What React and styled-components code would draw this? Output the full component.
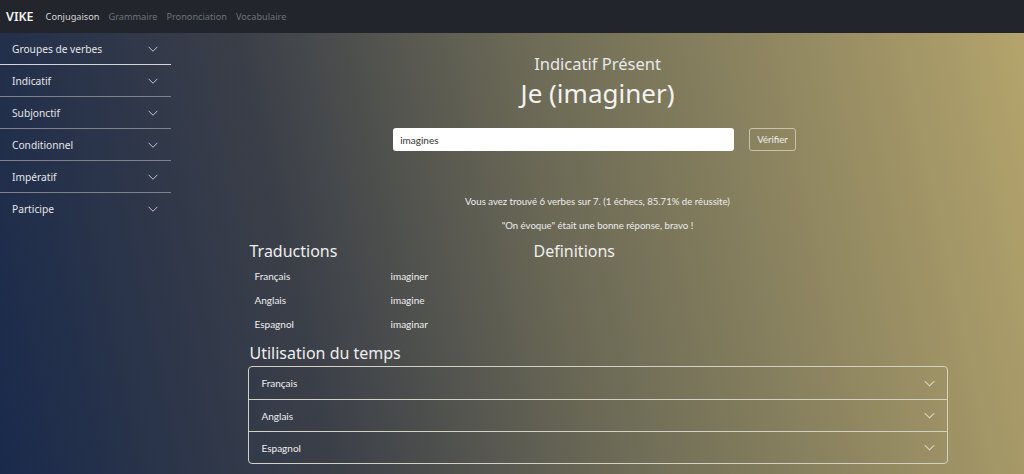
import React from "react";
import styled, { createGlobalStyle } from "styled-components";

const Global = createGlobalStyle`
  html, body { margin: 0; padding: 0; }
  body {
    font-family: "Lato", "Open Sans", sans-serif;
    background: #212529;
    width: 1024px;
    height: 474px;
    overflow: hidden;
  }
  * { box-sizing: border-box; }
`;

const Page = styled.div`
  width: 1024px;
  height: 474px;
  display: flex;
  flex-direction: column;
`;

const Navbar = styled.nav`
  height: 33px;
  background: #22252b;
  display: flex;
  align-items: center;
  padding: 0 6px;
  gap: 9px;
  font-family: "Noto Sans", sans-serif;
  flex-shrink: 0;
`;

const Brand = styled.span`
  color: #f2f2f2;
  font-size: 12.5px;
  font-weight: 600;
  margin-right: 3px;
`;

const NavLink = styled.span`
  color: ${(p) => (p.$active ? "#d8d8d8" : "#6f737a")};
  font-size: 9.2px;
`;

const Body = styled.div`
  flex: 1;
  display: flex;
  background: linear-gradient(78deg, #1a2a4c 0%, #3b3f48 30%, #6c6a56 55%, #b4a46c 100%);
`;

const Sidebar = styled.aside`
  width: 171px;
  flex-shrink: 0;
  display: flex;
  flex-direction: column;
`;

const SideItem = styled.div`
  height: 32px;
  flex-shrink: 0;
  display: flex;
  align-items: center;
  justify-content: space-between;
  padding: 0 12px 0 12px;
  color: #e6e6e6;
  font-family: "Noto Sans", sans-serif;
  font-size: 10.2px;
  border-bottom: ${(p) => (p.$last ? "none" : p.$strong ? "1.5px solid #d2d5da" : "1px solid #7d828c")};
`;

const Chevron = ({ size = 12, color = "#c8c8c8" }) => (
  <svg width={size} height={size} viewBox="0 0 16 16" fill="none">
    <path d="M2.5 5.5 L8 11 L13.5 5.5" stroke={color} strokeWidth="1.3" strokeLinecap="round" strokeLinejoin="round" />
  </svg>
);

const Main = styled.main`
  flex: 1;
  display: flex;
  justify-content: center;
`;

const Container = styled.div`
  width: 700px;
  display: flex;
  flex-direction: column;
  color: #ececec;
`;

const Subtitle = styled.div`
  text-align: center;
  font-family: "Noto Sans", sans-serif;
  font-size: 16.5px;
  margin-top: 20px;
  line-height: 22px;
  color: #e8e8e8;
`;

const Title = styled.div`
  text-align: center;
  font-family: "Noto Sans", sans-serif;
  font-size: 26px;
  line-height: 32px;
  margin-top: 2px;
  color: #f2f2f2;
`;

const FormRow = styled.div`
  display: flex;
  justify-content: center;
  gap: 15px;
  margin-top: 19px;
  padding-right: 6px;
`;

const Input = styled.div`
  width: 341px;
  height: 23px;
  background: #fff;
  border-radius: 3px;
  display: flex;
  align-items: center;
  padding-left: 7px;
  font-size: 10px;
  color: #333;
`;

const Button = styled.div`
  height: 23px;
  padding: 0 7px;
  border: 1px solid #c9c3ad;
  border-radius: 3px;
  display: flex;
  align-items: center;
  font-size: 9.6px;
  color: #eee;
`;

const Info = styled.div`
  text-align: center;
  font-size: 9.6px;
  line-height: 14px;
  margin-top: ${(p) => p.$mt}px;
`;

const Columns = styled.div`
  display: grid;
  grid-template-columns: 286px 1fr;
  margin-top: 8px;
`;

const H2 = styled.div`
  font-family: "Noto Sans", sans-serif;
  font-size: 16px;
  line-height: 20px;
  color: #eee;
  padding-left: ${(p) => p.$pl ?? 2}px;
  margin-top: ${(p) => p.$mt ?? 0}px;
`;

const Table = styled.div`
  display: grid;
  grid-template-columns: 136px 1fr;
  padding-left: 7px;
  margin-top: 3px;
`;

const Cell = styled.div`
  font-size: 10px;
  height: 24px;
  line-height: 24px;
  color: #eee;
`;

const Accordion = styled.div`
  margin-top: 3px;
  border: 1px solid #d3d0c4;
  border-radius: 4px;
  display: flex;
  flex-direction: column;
`;

const AccRow = styled.div`
  height: 32px;
  display: flex;
  align-items: center;
  justify-content: space-between;
  padding: 0 11px 0 13px;
  font-size: 10px;
  color: #eee;
  border-top: ${(p) => (p.$first ? "none" : "1px solid #d3d0c4")};
`;

export default function App() {
  const side = ["Groupes de verbes", "Indicatif", "Subjonctif", "Conditionnel", "Impératif", "Participe"];
  const trans = [
    ["Français", "imaginer"],
    ["Anglais", "imagine"],
    ["Espagnol", "imaginar"],
  ];
  return (
    <Page>
      <Global />
      <Navbar>
        <Brand>VIKE</Brand>
        <NavLink $active>Conjugaison</NavLink>
        <NavLink>Grammaire</NavLink>
        <NavLink>Prononciation</NavLink>
        <NavLink>Vocabulaire</NavLink>
      </Navbar>
      <Body>
        <Sidebar>
          {side.map((s, i) => (
            <SideItem key={s} $strong={i === 0} $last={i === side.length - 1}>
              <span>{s}</span>
              <Chevron />
            </SideItem>
          ))}
        </Sidebar>
        <Main>
          <Container>
            <Subtitle>Indicatif Présent</Subtitle>
            <Title>Je (imaginer)</Title>
            <FormRow>
              <Input>imagines</Input>
              <Button>Vérifier</Button>
            </FormRow>
            <Info $mt={44}>Vous avez trouvé 6 verbes sur 7. (1 échecs, 85.71% de réussite)</Info>
            <Info $mt={10}>"On évoque" était une bonne réponse, bravo !</Info>
            <Columns>
              <div>
                <H2>Traductions</H2>
                <Table>
                  {trans.map(([a, b]) => (
                    <React.Fragment key={a}>
                      <Cell>{a}</Cell>
                      <Cell>{b}</Cell>
                    </React.Fragment>
                  ))}
                </Table>
              </div>
              <div>
                <H2 $pl={0}>Definitions</H2>
              </div>
            </Columns>
            <H2 $mt={7}>Utilisation du temps</H2>
            <Accordion>
              {["Français", "Anglais", "Espagnol"].map((s, i) => (
                <AccRow key={s} $first={i === 0}>
                  <span>{s}</span>
                  <Chevron size={13} color="#d8d4c6" />
                </AccRow>
              ))}
            </Accordion>
          </Container>
        </Main>
      </Body>
    </Page>
  );
}
